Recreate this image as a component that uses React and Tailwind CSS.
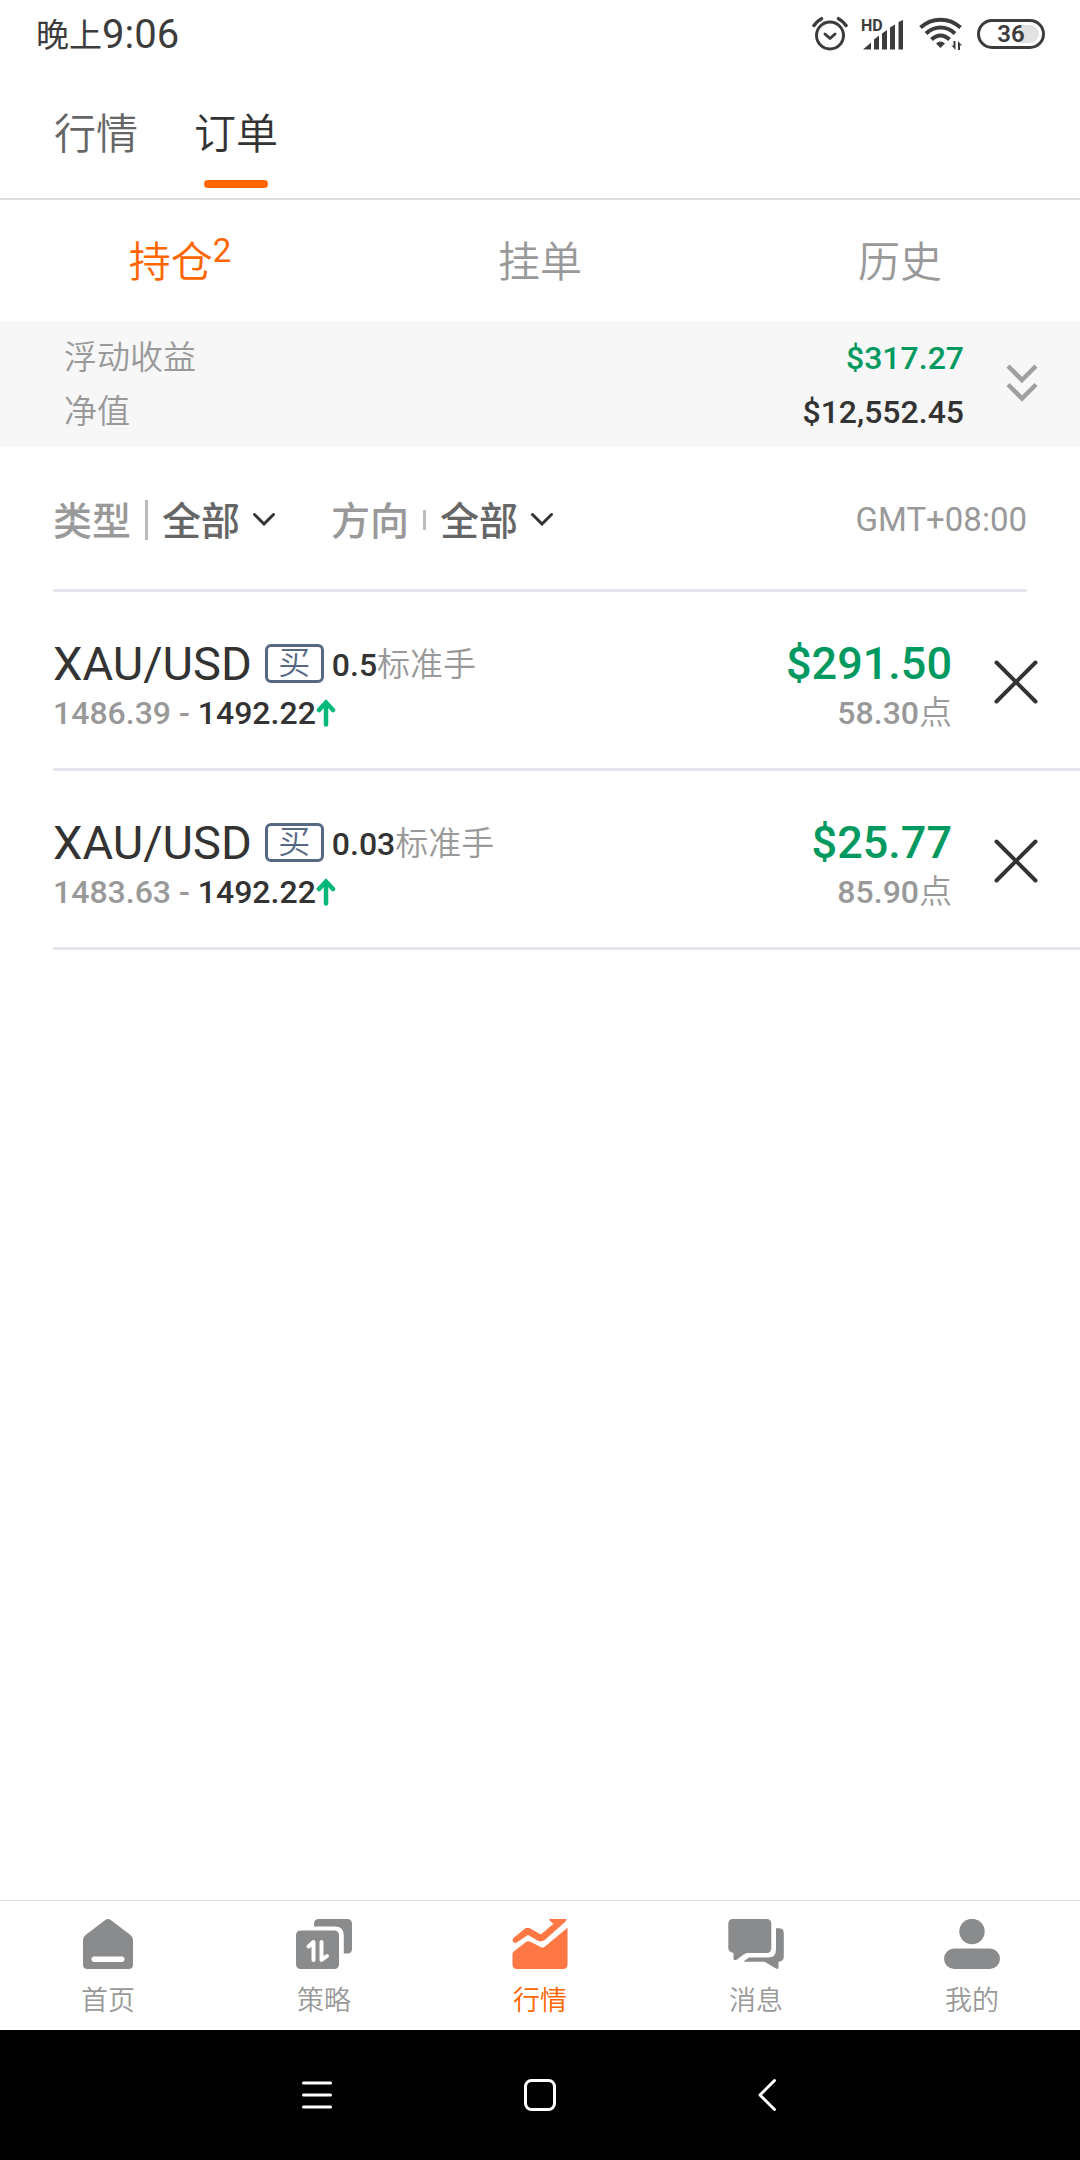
import { useState } from 'react';
import clsx from 'clsx';

const POSITIONS = [
  { id: 1, symbol: 'XAU/USD', side: '买', lots: '0.5', open: '1486.39', price: '1492.22', profit: '$291.50', points: '58.30' },
  { id: 2, symbol: 'XAU/USD', side: '买', lots: '0.03', open: '1483.63', price: '1492.22', profit: '$25.77', points: '85.90' },
];

// ==================== Status bar ====================
function StatusBar() {
  return (
    <div className="flex h-[68px] items-center justify-between pl-9 pr-[35px] text-[#3c3c3c]">
      <div className="flex items-center pt-[2px] leading-none">
        <span className="text-[33px]">晚上</span>
        <span className="text-[40px]">9:06</span>
      </div>

      <div className="flex items-center">
        {/* Alarm */}
        <svg className="mr-[13px] h-[36px] w-[36px]" viewBox="0 0 36 36" fill="none" stroke="currentColor" strokeLinecap="round">
          <circle cx="18" cy="19.500" r="13.500" strokeWidth="3" />
          <path strokeWidth="3" strokeLinejoin="round" d="M13 18l5 4.500 5-4.500" />
          <path strokeWidth="3.500" d="M2 9.500C4 6.500 6.500 4.200 9.500 2.700M34 9.500C32 6.500 29.500 4.200 26.500 2.700" />
        </svg>

        {/* Signal */}
        <div className="relative mr-[15px] h-[32px] w-[43px]">
          <span className="absolute left-0 top-0 text-[16px] font-bold leading-none">HD</span>
          <svg className="h-full w-full" viewBox="0 0 43 32" fill="currentColor">
            <path d="M2 31.500L10 24.500V31.500ZM13 21.500L18 17.500V31.500H13ZM21 15.500L26 12V31.500H21ZM29 9.500L34 6.500V31.500H29ZM37.500 4L42 2V31.500H37.500Z" />
          </svg>
        </div>

        {/* Wi-Fi */}
        <svg className="mr-[14px] h-[36px] w-[44px]" viewBox="0 0 44 36" fill="none" stroke="currentColor" strokeWidth="4">
          <path d="M1.500 11.500C13 1 30 1 41.500 11.500" />
          <path d="M7 17.500C15.500 9.500 27.500 9.500 36 17.500" />
          <path d="M12.500 23.500C18 18 25 18 30.500 23.500" />
          <path fill="currentColor" stroke="none" d="M17 27.500Q21.500 23.500 26 27.500L21.500 32Z" />
          <path fill="currentColor" stroke="none" d="M36.500 25V34L32.500 29.500H34.500V25ZM39 34V25L43 29.500H41V34Z" />
        </svg>

        {/* Battery */}
        <div className="relative flex h-[30px] w-[68px] items-center justify-center rounded-full border-3 border-[#3c3c3c]">
          <span className="absolute inset-y-[3px] right-[3px] w-5 rounded-r-full bg-[#e2e2e2]" />
          <span className="relative text-[24px] font-semibold leading-none">36</span>
        </div>
      </div>
    </div>
  );
}

// ==================== Filter drop-down ====================
function Filter({ id, label, options, tall }) {
  const [value, setValue] = useState(options[0]);

  return (
    <div className="flex items-center">
      <label htmlFor={id} className="pt-1 text-[39px] font-medium leading-[48px] text-[#999]">
        {label}
      </label>
      <span className={clsx('mx-[14px] w-[3px] bg-[#bbb]', tall ? 'h-10' : 'h-5')} />
      <div className="relative">
        <select
          id={id}
          value={value}
          onChange={(e) => setValue(e.target.value)}
          className="block h-[52px] appearance-none bg-transparent pr-9 pt-1 text-[39px] font-medium leading-[48px] text-[#666]"
        >
          {options.map((option) => (
            <option key={option}>{option}</option>
          ))}
        </select>
        <svg
          className="pointer-events-none absolute right-[2px] top-[18px] h-[14px] w-[22px]"
          viewBox="0 0 22 14"
          fill="none"
          stroke="#333"
          strokeWidth="3"
          strokeLinecap="round"
        >
          <path d="M1.500 2.500l9.500 9.500L20.500 2.500" />
        </svg>
      </div>
    </div>
  );
}

// ==================== Position row ====================
function PositionRow({ position }) {
  return (
    <li className="ml-[53px] flex h-[179px] items-center border-b-3 border-[#e4e4ea]">
      <div className="flex-1 pt-4">
        <div className="flex h-[50px] items-center">
          <span className="text-[47px] leading-none text-[#333]">{position.symbol}</span>
          <span className="ml-[13px] flex h-[39px] w-[59px] items-center justify-center rounded-md border-3 border-[#566884] text-[32px] font-[350] leading-none text-[#566884]">
            {position.side}
          </span>
          <div className="flex items-center pl-2 pt-[3px] leading-none">
            <span className="text-[32px] font-medium text-[#333]">{position.lots}</span>
            <span className="text-[33px] font-[350] text-[#999]">标准手</span>
          </div>
        </div>
        <div className="flex h-[50px] items-center text-[32px] font-medium text-[#333]">
          <span className="whitespace-pre text-[#999]">{position.open} - </span>
          <span>{position.price}</span>
          <svg className="h-[28px] w-[20px]" viewBox="0 0 20 28" fill="none" stroke="#00b978" strokeWidth="4.500" strokeLinecap="round">
            <path d="M10 25.500V4" />
            <path d="M3 11L10 3.500L17 11" />
          </svg>
        </div>
      </div>

      <div className="pt-4 text-right">
        <div className="flex h-[50px] items-center justify-end text-[45px] font-medium leading-none text-[#009960]">
          {position.profit}
        </div>
        <div className="flex h-[50px] items-center justify-end text-[#999]">
          <span className="text-[32px] font-medium">{position.points}</span>
          <span className="text-[33px] font-[350]">点</span>
        </div>
      </div>

      <button type="button" aria-label="平仓" className="px-[42px] pt-[4px]">
        <svg className="h-[44px] w-[44px]" viewBox="0 0 44 44" fill="none" stroke="#333" strokeWidth="4" strokeLinecap="round">
          <path d="M2.500 2.500l39 39M41.500 2.500l-39 39" />
        </svg>
      </button>
    </li>
  );
}

// ==================== Bottom tab bar ====================
function HomeIcon() {
  return (
    <svg className="h-[50px] w-[56px]" viewBox="0 0 56 50">
      <path fill="#8a8b8c" d="M3 21Q3 18 5.500 16L25 1.200Q28 -1 31 1.200L50.500 16Q53 18 53 21V45.500Q53 50 48.500 50H7.500Q3 50 3 45.500Z" />
      <rect fill="#fff" x="11.500" y="37.500" width="33" height="5.500" rx="2.700" />
    </svg>
  );
}

function StrategyIcon() {
  return (
    <svg className="h-[50px] w-[56px]" viewBox="0 0 56 50">
      <path fill="#8a8b8c" d="M18 7.500V5Q18 0 23 0H51Q56 0 56 5V30Q56 34.500 51 34.500H47.800V16Q47.800 7.500 39 7.500Z" />
      <rect fill="#8a8b8c" y="11.500" width="43" height="38.500" rx="4.500" />
      <path fill="none" stroke="#fff" strokeWidth="4" strokeLinecap="round" strokeLinejoin="round" d="M17.500 41V23L12.500 27.500M25.500 23V41L31 37" />
    </svg>
  );
}

function MarketIcon() {
  return (
    <svg className="h-[50px] w-[56px]" viewBox="0 0 56 50" fill="#ff7744">
      <path d="M1.500 19L13.500 9.300Q15.500 8 17.800 9.300L28.800 15.500L41.500 4.800L37 1Q37 0 38 0H54.500Q54.500 1.500 53 3L33 20.800Q29.500 23.500 25.500 21.400L16 16L5 23.300Q3 24.500 1 23Q0 21 1.500 19Z" />
      <path d="M0.500 35Q0.500 33.500 2 32.300L14 23Q16.500 21.300 19 23L28.500 28Q31 29.300 33 27.500L55.500 8.700V45.500Q55.500 50 51 50H5Q0.500 50 0.500 45.500Z" />
    </svg>
  );
}

function MessageIcon() {
  return (
    <svg className="h-[50px] w-[56px]" viewBox="0 0 56 50" fill="#8a8b8c">
      <path d="M5 0H38.500Q43.300 0 43.300 5V29Q43.300 34 38.500 34H20Q18 34 16 35.300L9 40.500Q5.500 42.500 5.500 39.500V34Q0.300 33 0.300 29V5Q0.300 0 5 0Z" />
      <path d="M48 9.300H51Q55.800 9.300 55.800 14V38Q55.800 42 50.500 43V48.500Q50.500 51 47.500 49.200L36.500 42.800H15.300L21 38.600H40Q48 38.600 48 30.500Z" />
    </svg>
  );
}

function ProfileIcon() {
  return (
    <svg className="h-[50px] w-[56px]" viewBox="0 0 56 50" fill="#8a8b8c">
      <circle cx="28" cy="12.500" r="12.700" />
      <rect y="29.500" width="56" height="20.500" rx="10.250" />
    </svg>
  );
}

const NAV_ITEMS = [
  { label: '首页', icon: HomeIcon },
  { label: '策略', icon: StrategyIcon },
  { label: '行情', icon: MarketIcon, active: true },
  { label: '消息', icon: MessageIcon },
  { label: '我的', icon: ProfileIcon },
];

function TabBar() {
  return (
    <nav className="grid h-[130px] grid-cols-5 border-t border-[#e0e0e0] bg-white">
      {NAV_ITEMS.map(({ label, icon: Icon, active }) => (
        <a
          key={label}
          href="#"
          className={clsx(
            'flex flex-col items-center pt-[18px] text-[27px] font-[350] leading-[36px]',
            active ? 'text-[#ff6600]' : 'text-[#999]'
          )}
        >
          <Icon />
          <span className="mt-[14px]">{label}</span>
        </a>
      ))}
    </nav>
  );
}

// ==================== System keys ====================
function SystemKeys() {
  return (
    <div className="flex h-[130px] items-center justify-center gap-[189px] bg-black">
      <button type="button" aria-label="菜单">
        <svg className="h-[34px] w-[34px]" viewBox="0 0 34 34" stroke="#fff" strokeWidth="3" strokeLinecap="round">
          <path d="M3.500 5h27M3.500 17h27M3.500 29h27" />
        </svg>
      </button>
      <button type="button" aria-label="主屏幕">
        <svg className="h-[34px] w-[34px]" viewBox="0 0 34 34" fill="none" stroke="#fff" strokeWidth="3">
          <rect x="2.500" y="2.500" width="29" height="29" rx="6" />
        </svg>
      </button>
      <button type="button" aria-label="返回">
        <svg className="h-[34px] w-[34px]" viewBox="0 0 34 34" fill="none" stroke="#fff" strokeWidth="3" strokeLinecap="round" strokeLinejoin="round">
          <path d="M28.500 2.500L14 17L28.500 31.500" />
        </svg>
      </button>
    </div>
  );
}

export default function App() {
  return (
    <div className="flex min-h-screen flex-col bg-white font-[Roboto,'Noto_Sans_CJK_SC',sans-serif]">
      <StatusBar />

      {/* Page tabs */}
      <header className="flex gap-14 border-b-2 border-[#dcdce2] pl-[54px] text-[42px] font-[350] leading-[48px]">
        <a href="#" className="pt-[43px] text-[#666]">行情</a>
        <a href="#" className="flex flex-col items-center pb-[10px] pt-[43px] text-[#333]">
          订单
          <span className="mt-[21px] h-2 w-16 rounded-full bg-[#ff6600]" />
        </a>
      </header>

      {/* Order tabs */}
      <div className="grid h-[121px] grid-cols-3 pt-1 text-[42px] font-[350] text-[#999]">
        <button type="button" className="flex items-center justify-center text-[#ff6600]">
          持仓
          <sup className="top-0 -mt-6 text-[33px] font-normal leading-none">2</sup>
        </button>
        <button type="button">挂单</button>
        <button type="button">历史</button>
      </div>

      {/* Account summary */}
      <section className="flex h-[126px] items-center bg-[#f7f7f7] pl-16 leading-[54px]">
        <dl className="flex-1 pt-[2px]">
          <div className="flex justify-between">
            <dt className="text-[33px] font-[350] text-[#999]">浮动收益</dt>
            <dd className="text-[32px] font-medium text-[#009960]">$317.27</dd>
          </div>
          <div className="flex justify-between">
            <dt className="text-[33px] font-[350] text-[#999]">净值</dt>
            <dd className="text-[32px] font-medium text-[#333]">$12,552.45</dd>
          </div>
        </dl>
        <button type="button" aria-label="展开" className="px-[42px]">
          <svg className="h-[40px] w-[32px]" viewBox="0 0 32 40" fill="none" stroke="#a0a0a0" strokeWidth="4.500">
            <path d="M2 2l14 14L30 2M2 20.500l14 14L30 20.500" />
          </svg>
        </button>
      </section>

      {/* Filters */}
      <section className="mx-[53px] flex h-[145px] items-center border-b-3 border-[#e4e4ea] pt-[3px]">
        <Filter id="type" label="类型" options={['全部', '外汇', '黄金']} tall />
        <div className="ml-[54px]">
          <Filter id="side" label="方向" options={['全部', '买', '卖']} />
        </div>
        <span className="ml-auto text-[33px] text-[#999]">GMT+08:00</span>
      </section>

      <ul className="flex-1">
        {POSITIONS.map((position) => (
          <PositionRow key={position.id} position={position} />
        ))}
      </ul>

      <TabBar />
      <SystemKeys />
    </div>
  );
}
